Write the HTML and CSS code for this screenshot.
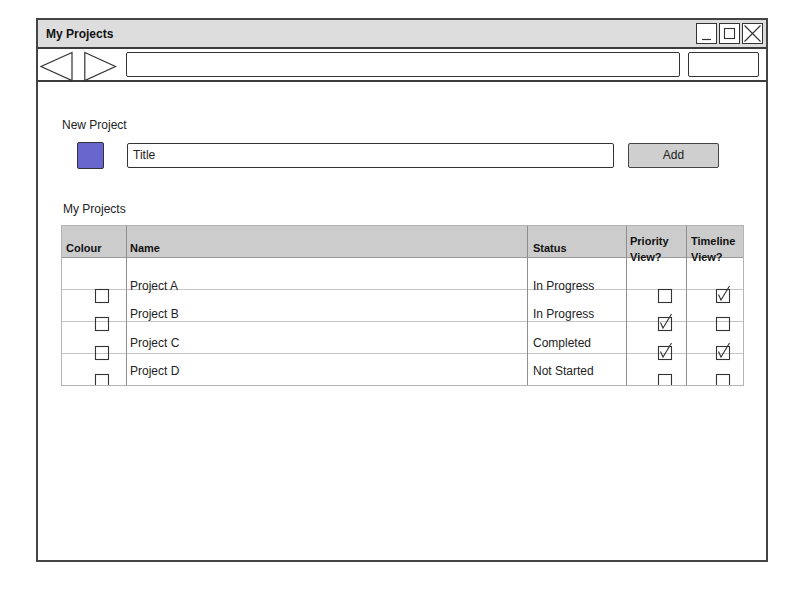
FILE: index.html
```html
<!DOCTYPE html>
<html>
<head>
<meta charset="utf-8">
<title>My Projects</title>
<link rel="stylesheet" href="styles.css">
</head>
<body>
<div class="page">
  <div class="window">
    <div class="titlebar">
      <span class="title">My Projects</span>
      <div class="winbtns">
        <span class="wbtn"><svg width="19" height="19" viewBox="0 0 19 19"><path d="M5 15.5 H14" stroke="#333" stroke-width="1.2" fill="none"/></svg></span>
        <span class="wbtn"><svg width="19" height="19" viewBox="0 0 19 19"><rect x="4.5" y="4.5" width="10" height="10" stroke="#333" stroke-width="1.1" fill="none"/></svg></span>
        <span class="wbtn"><svg width="19" height="19" viewBox="0 0 19 19"><path d="M1.5 1.5 L17.5 17.5 M17.5 1.5 L1.5 17.5" stroke="#333" stroke-width="1.1" fill="none"/></svg></span>
      </div>
    </div>
    <div class="toolbar">
      <svg class="nav" width="33" height="29" viewBox="0 0 33 29"><path d="M32 0.5 L1 14.5 L32 28.5 Z" fill="none" stroke="#333" stroke-width="1.2"/></svg>
      <svg class="nav fwd" width="33" height="29" viewBox="0 0 33 29"><path d="M0.8 0.5 L31.5 14.5 L0.8 28.5 Z" fill="none" stroke="#333" stroke-width="1.2"/></svg>
      <div class="url"></div>
      <div class="search"></div>
    </div>
    <div class="content">
      <div class="label">New Project</div>
      <div class="newrow">
        <span class="swatch"></span>
        <div class="input">Title</div>
        <div class="btn">Add</div>
      </div>
      <div class="label label2">My Projects</div>
      <div class="table">
        <div class="thead">
          <div class="th c1">Colour</div>
          <div class="th c2">Name</div>
          <div class="th c3">Status</div>
          <div class="th c4 two">Priority<br>View?</div>
          <div class="th c5 two">Timeline<br>View?</div>
        </div>
        <div class="tbody">
          <div class="td c1"></div><div class="td c2"></div><div class="td c3"></div><div class="td c4"></div><div class="td c5"></div>

          <div class="td c1"><svg class="cb" width="14" height="14" viewBox="0 0 14 14"><rect x="0.5" y="0.5" width="13" height="13"/></svg></div>
          <div class="td c2 txt">Project A</div>
          <div class="td c3 txt">In Progress</div>
          <div class="td c4"><svg class="cb" width="14" height="14" viewBox="0 0 14 14"><rect x="0.5" y="0.5" width="13" height="13"/></svg></div>
          <div class="td c5"><svg class="cb" width="14" height="14" viewBox="0 0 14 14"><rect x="0.5" y="0.5" width="13" height="13"/><path d="M2.5 5.5 L5 11 L13.5 -3"/></svg></div>

          <div class="td c1"><svg class="cb" width="14" height="14" viewBox="0 0 14 14"><rect x="0.5" y="0.5" width="13" height="13"/></svg></div>
          <div class="td c2 txt">Project B</div>
          <div class="td c3 txt">In Progress</div>
          <div class="td c4"><svg class="cb" width="14" height="14" viewBox="0 0 14 14"><rect x="0.5" y="0.5" width="13" height="13"/><path d="M2.5 5.5 L5 11 L13.5 -3"/></svg></div>
          <div class="td c5"><svg class="cb" width="14" height="14" viewBox="0 0 14 14"><rect x="0.5" y="0.5" width="13" height="13"/></svg></div>

          <div class="td c1"><svg class="cb" width="14" height="14" viewBox="0 0 14 14"><rect x="0.5" y="0.5" width="13" height="13"/></svg></div>
          <div class="td c2 txt">Project C</div>
          <div class="td c3 txt">Completed</div>
          <div class="td c4"><svg class="cb" width="14" height="14" viewBox="0 0 14 14"><rect x="0.5" y="0.5" width="13" height="13"/><path d="M2.5 5.5 L5 11 L13.5 -3"/></svg></div>
          <div class="td c5"><svg class="cb" width="14" height="14" viewBox="0 0 14 14"><rect x="0.5" y="0.5" width="13" height="13"/><path d="M2.5 5.5 L5 11 L13.5 -3"/></svg></div>

          <div class="td c1"><svg class="cb" width="14" height="14" viewBox="0 0 14 14"><rect x="0.5" y="0.5" width="13" height="13"/></svg></div>
          <div class="td c2 txt">Project D</div>
          <div class="td c3 txt">Not Started</div>
          <div class="td c4"><svg class="cb" width="14" height="14" viewBox="0 0 14 14"><rect x="0.5" y="0.5" width="13" height="13"/></svg></div>
          <div class="td c5"><svg class="cb" width="14" height="14" viewBox="0 0 14 14"><rect x="0.5" y="0.5" width="13" height="13"/></svg></div>
        </div>
      </div>
    </div>
  </div>
</div>
</body>
</html>
```

FILE: styles.css
```css
* { box-sizing: border-box; }
html, body { margin: 0; padding: 0; background: #fff; }
body {
  font-family: "Liberation Sans", Arial, sans-serif;
  font-size: 12px;
  color: #222;
}
.page { padding: 18px 0 0 36px; }
.window {
  width: 732px;
  height: 544px;
  border: 2px solid #444;
  background: #fff;
  display: flex;
  flex-direction: column;
}
.titlebar {
  height: 29px;
  background: #dddddd;
  border-bottom: 2px solid #3c3c3c;
  display: flex;
  align-items: center;
  justify-content: space-between;
  padding: 0 3px 0 8px;
}
.title { font-weight: bold; font-size: 12px; color: #111; }
.winbtns { display: flex; gap: 2px; }
.wbtn {
  width: 21px;
  height: 21px;
  border: 1px solid #333;
  background: #fff;
  display: block;
}
.wbtn svg { display: block; }
.toolbar {
  height: 33px;
  border-bottom: 2px solid #3c3c3c;
  display: flex;
  align-items: flex-start;
  padding: 3px 7px 0 2px;
}
.nav { display: block; overflow: visible; }
.fwd { margin-left: 11px; }
.url {
  margin-left: 9px;
  width: 555px;
  height: 25px;
  border: 1px solid #333;
  border-radius: 2px;
}
.search {
  margin-left: 8px;
  width: 71px;
  height: 25px;
  border: 1px solid #333;
  border-radius: 2px;
}
.content {
  padding: 35px 0 0 24px;
  display: flex;
  flex-direction: column;
  align-items: flex-start;
}
.label { font-size: 12px; line-height: 16px; }
.label2 { margin-top: 33px; padding-left: 1px; }
.newrow {
  margin-top: 9px;
  display: flex;
  align-items: center;
  height: 26px;
}
.swatch {
  margin-left: 15px;
  width: 27px;
  height: 27px;
  background: #6666cc;
  border: 1px solid #333;
  border-radius: 2px;
}
.input {
  margin-left: 23px;
  width: 487px;
  height: 25px;
  border: 1px solid #333;
  border-radius: 2px;
  padding: 4px 5px;
  font-size: 12px;
  line-height: 15px;
}
.btn {
  margin-left: 14px;
  width: 91px;
  height: 25px;
  border: 1px solid #444;
  border-radius: 2px;
  background: #cfcfcf;
  text-align: center;
  line-height: 23px;
  font-size: 12px;
}
.table {
  margin-top: 8px;
  margin-left: -1px;
  width: 683px;
  border: 1px solid #b4b4b4;
}
.thead, .tbody {
  display: grid;
  grid-template-columns: 64px 401px 99px 60px 57px;
}
.thead {
  height: 32px;
  background: #cccccc;
  border-bottom: 1px solid #9a9a9a;
}
.th {
  font-weight: bold;
  font-size: 11px;
  line-height: 14px;
  padding-top: 15px;
  color: #111;
  white-space: nowrap;
}
.th.two { padding-top: 7px; line-height: 16px; }
.th.c1 { padding-left: 4px; }
.th.c2 { padding-left: 3px; }
.th.c3 { padding-left: 5px; }
.th.c4 { padding-left: 3px; }
.th.c5 { padding-left: 4px; }
.c2, .c3, .c4, .c5 { border-left: 1px solid #8e8e8e; }
.tbody {
  height: 127px;
  overflow: hidden;
  grid-template-rows: 20px repeat(4, 28.4px);
  background-image: linear-gradient(to bottom, transparent 0, transparent 31px, #c4c4c4 31px, #c4c4c4 32px);
  background-size: 100% 32px;
}
.td.txt { line-height: 14px; padding-top: 1px; font-size: 12px; white-space: nowrap; }
.td.c2.txt { padding-left: 3px; }
.td.c3.txt { padding-left: 5px; }
.cb {
  display: block;
  margin-top: 11px;
  overflow: visible;
  fill: none;
  stroke: #333;
  stroke-width: 1.1;
}
.td.c1 .cb { margin-left: 33px; }
.td.c4 .cb { margin-left: 31px; }
.td.c5 .cb { margin-left: 29px; }
```
